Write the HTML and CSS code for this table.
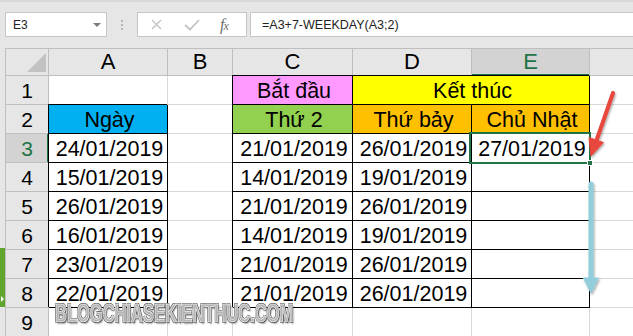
FILE: index.html
```html
<!DOCTYPE html>
<html>
<head>
    <meta charset="UTF-8">
    <link rel="stylesheet" href="styles.css">
</head>
<body>
    <!-- thanh công thức -->
    <div class="toolbar">
        <div class="namebox"><span>E3</span><i class="caret"></i></div>
        <div class="grip"><i></i><i></i><i></i></div>
        <div class="fxbox">
            <svg class="ico-x" width="11" height="11" viewBox="0 0 11 11"><path d="M1 1L10 10M10 1L1 10" stroke="#c2c2c2" stroke-width="1.4" fill="none"/></svg>
            <svg class="ico-ok" width="16" height="12" viewBox="0 0 16 12"><path d="M1 6L6 10.5L15 1" stroke="#c2c2c2" stroke-width="1.8" fill="none"/></svg>
            <span class="fx"><i>f</i><i class="sub">x</i></span>
        </div>
        <div class="formula">=A3+7-WEEKDAY(A3;2)</div>
    </div>

    <div class="main">
        <div class="strip"><div class="group"><i></i></div></div>
        <div class="sheet">
            <!-- tiêu đề cột -->
            <div class="corner"><i></i></div>
            <div class="ch">A</div>
            <div class="ch">B</div>
            <div class="ch">C</div>
            <div class="ch">D</div>
            <div class="ch on">E</div>
            <div class="ch last"></div>

            <div class="rh">1</div>
            <div class="c"></div>
            <div class="c"></div>
            <div class="c bx pink">Bắt đầu</div>
            <div class="c bx yellow span2">Kết thúc</div>
            <div class="c last"></div>

            <div class="rh">2</div>
            <div class="c bx blue">Ngày</div>
            <div class="c"></div>
            <div class="c bx green">Thứ 2</div>
            <div class="c bx orange">Thứ bảy</div>
            <div class="c bx orange">Chủ Nhật</div>
            <div class="c last"></div>

            <div class="rh on">3</div>
            <div class="c bx">24/01/2019</div>
            <div class="c"></div>
            <div class="c bx">21/01/2019</div>
            <div class="c bx">26/01/2019</div>
            <div class="c bx sel">27/01/2019</div>
            <div class="c last"></div>

            <div class="rh">4</div>
            <div class="c bx">15/01/2019</div>
            <div class="c"></div>
            <div class="c bx">14/01/2019</div>
            <div class="c bx">19/01/2019</div>
            <div class="c bx"></div>
            <div class="c last"></div>

            <div class="rh">5</div>
            <div class="c bx">26/01/2019</div>
            <div class="c"></div>
            <div class="c bx">21/01/2019</div>
            <div class="c bx">26/01/2019</div>
            <div class="c bx"></div>
            <div class="c last"></div>

            <div class="rh">6</div>
            <div class="c bx">16/01/2019</div>
            <div class="c"></div>
            <div class="c bx">14/01/2019</div>
            <div class="c bx">19/01/2019</div>
            <div class="c bx"></div>
            <div class="c last"></div>

            <div class="rh">7</div>
            <div class="c bx">23/01/2019</div>
            <div class="c"></div>
            <div class="c bx">21/01/2019</div>
            <div class="c bx">26/01/2019</div>
            <div class="c bx"></div>
            <div class="c last"></div>

            <div class="rh">8</div>
            <div class="c bx">22/01/2019</div>
            <div class="c"></div>
            <div class="c bx">21/01/2019</div>
            <div class="c bx">26/01/2019</div>
            <div class="c bx"></div>
            <div class="c last"></div>

            <div class="rh">9</div>
            <div class="c"></div>
            <div class="c"></div>
            <div class="c"></div>
            <div class="c"></div>
            <div class="c"></div>
            <div class="c last"></div>
        </div>
    </div>

    <!-- mũi tên chú thích -->
    <svg class="arrows" width="633" height="336" viewBox="0 0 633 336">
        <defs>
            <filter id="sh" x="-50%" y="-50%" width="200%" height="200%">
                <feDropShadow dx="1" dy="1.5" stdDeviation="1" flood-color="#000" flood-opacity="0.35"/>
            </filter>
        </defs>
        <g filter="url(#sh)" fill="#e8463d" stroke="#e8463d">
            <line x1="613" y1="93" x2="597" y2="139" stroke-width="4" stroke-linecap="round"/>
            <polygon points="591,156 603.5,142.5 589,137.5" stroke-width="1" stroke-linejoin="round"/>
        </g>
        <g filter="url(#sh)" fill="#92cddc" stroke="#92cddc">
            <line x1="591" y1="184" x2="591" y2="280" stroke-width="5" stroke-linecap="round"/>
            <polygon points="583.5,278 598.5,278 591,293" stroke-width="1" stroke-linejoin="round"/>
        </g>
    </svg>

    <div class="watermark">BLOGCHIASEKIENTHUC.COM</div>
</body>
</html>
```

FILE: styles.css
```css
html,body{margin: 0;padding: 0;}
body{
    width: 633px;height: 336px;overflow: hidden;
    position: relative;background: #e6e6e6;
    font-family: "Liberation Sans", Arial, sans-serif;color: #000;
}

/* thanh công thức */
.toolbar{
    height: 48px;box-sizing: border-box;
    border-top: 2px solid #d9d9d9;
    padding: 10px 0 0 5px;
    display: flex;align-items: flex-start;
}
.namebox, .fxbox, .formula{
    height: 25px;box-sizing: border-box;
    border: 1px solid #c6c6c6;background: #fff;
}
.namebox{
    width: 102px;display: flex;align-items: center;
    padding-left: 7px;font-size: 12px;color: #222;
}
.namebox span{padding-top: 1px;}
.caret{
    margin-left: auto;margin-right: 5px;width: 0;height: 0;
    border-left: 4px solid transparent;border-right: 4px solid transparent;
    border-top: 4px solid #7d7d7d;
}
.grip{width: 2px;margin: 8px 14px 0;}
.grip i{display: block;width: 2px;height: 2px;background: #b5b5b5;margin-bottom: 2px;}
.fxbox{width: 110px;display: flex;align-items: center;padding-left: 13px;}
.ico-ok{margin-left: 22px;}
.fx{
    margin-left: 20px;color: #6b6b6b;
    font-family: "Liberation Serif", serif;font-style: italic;
}
.fx i{font-size: 16px;}
.fx .sub{font-size: 12px;margin-left: -1px;}
.formula{
    flex: 1;margin: 0 -3px 0 3px;
    padding: 1px 0 0 11px;font-size: 12.5px;line-height: 22px;color: #222;
}

/* bảng tính */
.main{display: flex;}
.strip{width: 5px;}
.strip .group{
    margin-top: 200px;height: 59px;background: #5fa52e;
    display: flex;align-items: flex-end;padding-bottom: 5px;box-sizing: border-box;
}
.strip .group i{
    width: 0;height: 0;margin-left: 1px;
    border-top: 3px solid transparent;border-bottom: 3px solid transparent;
    border-left: 3px solid #fff;
}
.sheet{
    flex: 1;display: grid;
    grid-template-columns: 44px 119px 65px 120px 119px 118px 1fr;
    grid-template-rows: 28px repeat(9, 29px);
    background: #fff;
}
.sheet > div{box-sizing: border-box;white-space: nowrap;}
.corner, .ch, .rh{background: #e6e6e6;border: 0 solid #bfbfbf;}
.corner, .ch{border-top-width: 1px;border-right-width: 1px;border-bottom-width: 1px;}
.corner{
    border-left-width: 1px;display: flex;justify-content: flex-end;align-items: flex-end;
    padding: 0 2px 3px 0;
}
.corner i{width: 19px;height: 19px;background: #c2c2c2;clip-path: polygon(100% 0, 100% 100%, 0 100%);}
.ch{font-size: 22px;line-height: 26px;text-align: center;}
.rh{
    border-left-width: 1px;border-right-width: 1px;border-bottom-width: 1px;
    font-size: 21px;line-height: 24px;padding-top: 3px;text-align: center;
}
.ch.on, .rh.on{background: #d3d3d3;color: #217346;}
.ch.on{border-bottom-color: #217346;box-shadow: inset 0 -1px 0 #217346;}
.rh.on{border-right-color: #217346;box-shadow: inset -1px 0 0 #217346;}

.c{
    border-right: 1px solid #d9d9d9;border-bottom: 1px solid #d9d9d9;
    font-size: 21.5px;line-height: 24px;padding: 2.5px 0 0 3px;text-align: center;
}
.last, .ch.last{border-right: 0;}
.span2{grid-column: span 2;}
.bx{border-right-color: #000;border-bottom-color: #000;box-shadow: -1px -1px 0 #000;}

.pink{background: #ff99ff;}
.yellow{background: #ffff00;}
.blue{background: #00b0f0;}
.green{background: #92d050;}
.orange{background: #ffc000;}

/* ô đang chọn */
.sel{position: relative;}
.sel::after{
    content: "";position: absolute;
    left: -3px;right: -2px;top: -2px;bottom: -2px;
    border: 2px solid #217346;
}
.sel::before{
    content: "";position: absolute;z-index: 1;
    right: -4px;bottom: -4px;width: 4px;height: 4px;
    background: #217346;border: 1px solid #fff;
}

.arrows{position: absolute;left: 0;top: 0;pointer-events: none;}

.watermark{
    position: absolute;left: 55px;top: 306px;
    font-size: 25px;line-height: 14px;font-weight: bold;
    color: #b4b4b4;
    transform: scaleX(0.66);transform-origin: 0 0;
    -webkit-text-stroke: 0.7px #fff;
    text-shadow: 1px 1px 0 #4a4a4a, -1px -1px 0 #6a6a6a, 1px -1px 0 #6a6a6a, -1px 1px 0 #6a6a6a, 2px 2px 2px rgba(0,0,0,.35);
}
```
